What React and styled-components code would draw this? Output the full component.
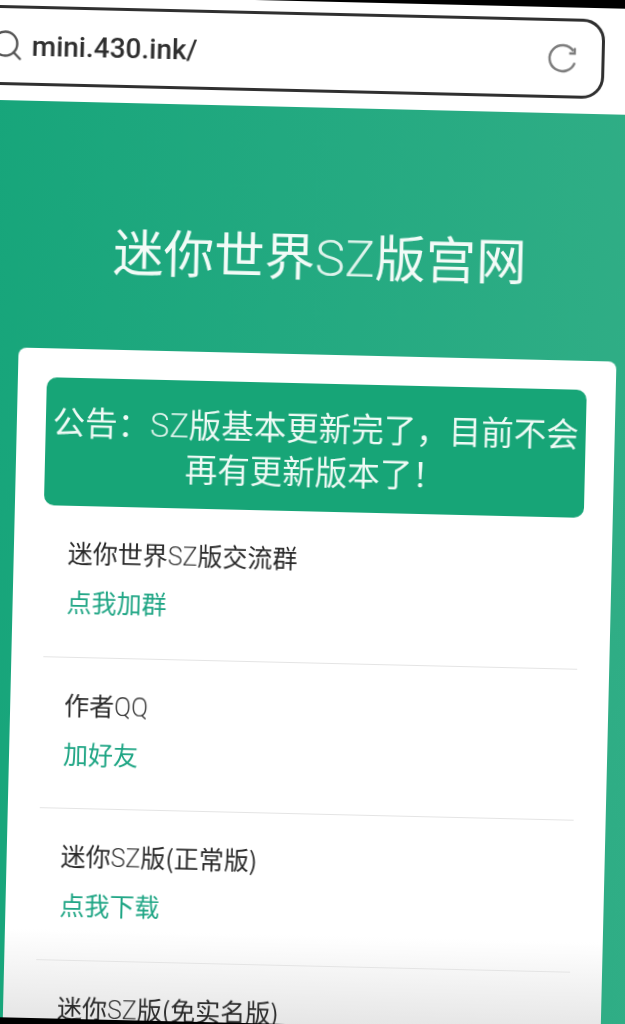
import styled, { createGlobalStyle } from "styled-components";
import { Search } from "lucide-react";

const GlobalStyle = createGlobalStyle`
  html, body {
    margin: 0;
    height: 100%;
    overflow: hidden;
    background: #000;
  }
  body {
    font-family: "Noto Sans CJK SC", "Noto Sans", sans-serif;
  }
`;

/* the reference is a slightly tilted photo of a phone, so the whole page is turned */
const Frame = styled.div`
  width: 720px;
  margin: -40px 0 0 -40px;
  transform: rotate(1.35deg);
  transform-origin: 40px 40px;
  filter: blur(0.5px);
`;

const Header = styled.header`
  margin-top: 34px;
  height: 106px;
  padding: 11px 75px 0 10px;
  box-sizing: border-box;
  background: #fff;
`;

const AddressBar = styled.div`
  height: 80px;
  box-sizing: border-box;
  display: flex;
  align-items: center;
  padding: 0 22px 0 16px;
  gap: 7px;
  border: 3px solid #303030;
  border-radius: 22px;
`;

const SearchIcon = styled(Search)`
  flex: none;
  color: #555;
`;

const Url = styled.span`
  flex: 1;
  font-family: Roboto, "Liberation Sans", sans-serif;
  font-size: 28px;
  font-weight: 500;
  color: #2f2f2f;
`;

const ReloadIcon = styled.svg`
  flex: none;
  width: 34px;
  height: 34px;
  fill: none;
  stroke: #7d7d7d;
  stroke-width: 2.4;
`;

const Main = styled.main`
  height: 917px;
  overflow: hidden;
  padding-left: 66px;
  background: linear-gradient(90deg, #16a57a 0%, #22a980 45%, #31ae86 100%);
`;

const Title = styled.h1`
  width: 598px;
  margin: 0;
  padding: 106px 0 61px;
  text-align: center;
  font-size: 50.5px;
  line-height: 80px;
  font-weight: 400;
  color: #f2fbf7;
`;

const Card = styled.section`
  width: 598px;
  box-sizing: border-box;
  height: 700px;
  padding: 29px 29px 0;
  border-radius: 8px;
  background: linear-gradient(180deg, #fff 0%, #fff 83%, #ddd 100%);
`;

const Notice = styled.div`
  height: 128px;
  box-sizing: border-box;
  padding-top: 21px;
  border-radius: 10px;
  text-align: center;
  font-size: 32.5px;
  line-height: 44px;
  font-weight: 400;
  color: #eefaf5;
  background: #17a577;
`;

const List = styled.ul`
  list-style: none;
  margin: 0;
  padding: 0 3px;
`;

const Item = styled.li`
  height: 151.5px;
  box-sizing: border-box;
  padding: 26px 0 0 22px;
  border-bottom: 1px solid #e4e4e4;
`;

const ItemTitle = styled.div`
  font-size: 25px;
  line-height: 40px;
  font-weight: 400;
  color: #2a2a2a;
`;

const ItemLink = styled.a`
  display: block;
  margin-top: 9px;
  font-size: 25px;
  line-height: 40px;
  font-weight: 400;
  color: #1ea584;
`;

/* latin letters are thinner than the chinese ones in the reference */
const Latin = styled.span`
  font-family: Roboto, "Liberation Sans", sans-serif;
  font-weight: 300;
  line-height: 1;
  opacity: 0.9;
`;

const Mixed = ({ text }) =>
  text
    .split(/([A-Za-z]+)/)
    .map((part, i) => (i % 2 ? <Latin key={i}>{part}</Latin> : part));

const items = [
  { title: "迷你世界SZ版交流群", link: "点我加群" },
  { title: "作者QQ", link: "加好友" },
  { title: "迷你SZ版(正常版)", link: "点我下载" },
  { title: "迷你SZ版(免实名版)" },
];

const App = () => {
  return (
    <>
      <GlobalStyle />
      <Frame>
        <Header>
          <AddressBar>
            <SearchIcon size={36} strokeWidth={1.6} />
            <Url>mini.430.ink/</Url>
            <ReloadIcon viewBox="0 0 34 34">
              <path d="M27.6 9.5A13 13 0 1 0 29.2 21.4" />
              <path d="M29 6.5V12H23.5" />
            </ReloadIcon>
          </AddressBar>
        </Header>
        <Main>
          <Title>
            <Mixed text="迷你世界SZ版宫网" />
          </Title>
          <Card>
            <Notice>
              <Mixed text={"公告\uFF1ASZ版基本更新完了\uFF0C目前不会"} />
              <br />
              {"再有更新版本了\uFF01"}
            </Notice>
            <List>
              {items.map((item) => (
                <Item key={item.title}>
                  <ItemTitle>
                    <Mixed text={item.title} />
                  </ItemTitle>
                  {item.link && <ItemLink>{item.link}</ItemLink>}
                </Item>
              ))}
            </List>
          </Card>
        </Main>
      </Frame>
    </>
  );
};

export default App;
